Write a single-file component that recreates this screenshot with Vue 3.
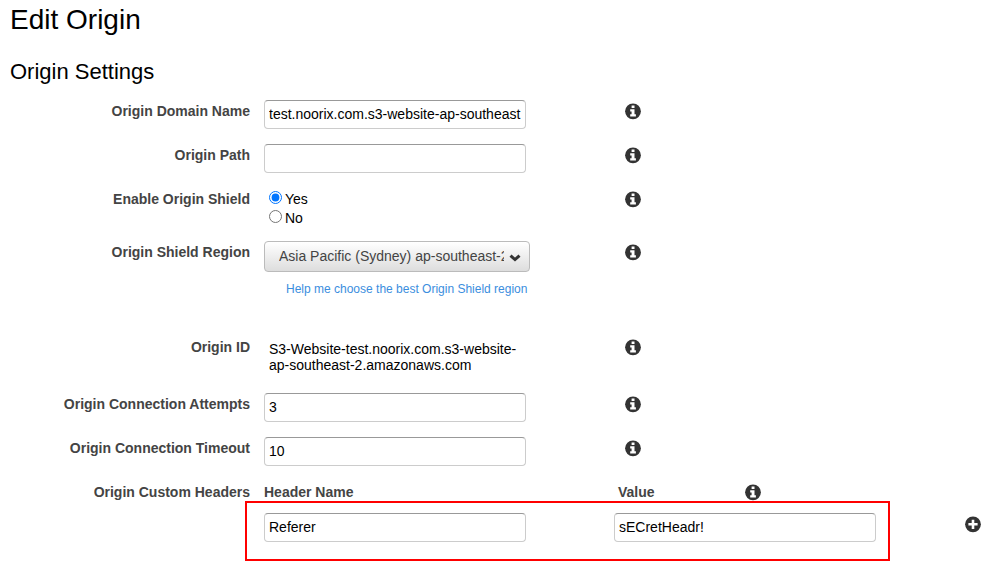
<script setup>
import { ref, h } from 'vue'

const domain = ref('test.noorix.com.s3-website-ap-southeast')
const path = ref('')
const shield = ref('yes')
const region = ref('ap-southeast-2')
const attempts = ref('3')
const timeout = ref('10')
const headerName = ref('Referer')
const headerValue = ref('sECretHeadr!')

const InfoIcon = () =>
  h('svg', { viewBox: '0 0 16 16', width: 16, height: 16, 'aria-hidden': 'true' }, [
    h('circle', { cx: 8, cy: 8.3, r: 7.9, fill: '#333' }),
    h('path', { d: 'M6.600 2.400h2.900v2.500H6.600zM5.200 6.200h4.300v5h1.400v2.200H5.200v-2.200h1.400V8.400H5.200z', fill: '#fff' }),
  ])
</script>

<template>
  <main class="page">
    <h1>Edit Origin</h1>
    <h2>Origin Settings</h2>
    <form class="form" @submit.prevent>
      <div class="row">
        <label class="name" for="domain">Origin Domain Name</label>
        <input id="domain" v-model="domain" class="text" type="text">
        <button class="icon" type="button" aria-label="About origin domain name"><InfoIcon /></button>
      </div>
      <div class="row">
        <label class="name" for="path">Origin Path</label>
        <input id="path" v-model="path" class="text" type="text">
        <button class="icon" type="button" aria-label="About origin path"><InfoIcon /></button>
      </div>
      <div class="row">
        <span id="shield-label" class="name">Enable Origin Shield</span>
        <div class="radios" role="radiogroup" aria-labelledby="shield-label">
          <label><input v-model="shield" type="radio" name="shield" value="yes">Yes</label>
          <label><input v-model="shield" type="radio" name="shield" value="no">No</label>
        </div>
        <button class="icon" type="button" aria-label="About origin shield"><InfoIcon /></button>
      </div>
      <div class="row region-row">
        <label class="name" for="region">Origin Shield Region</label>
        <div class="region">
          <div class="select">
            <select id="region" v-model="region">
              <option value="ap-southeast-2">Asia Pacific (Sydney) ap-southeast-2</option>
            </select>
            <svg class="chevron" viewBox="0 0 12 8" width="12" height="8" aria-hidden="true">
              <path d="M1.500 1.600 6 5.600l4.500-4" fill="none" stroke="#333" stroke-width="3" />
            </svg>
          </div>
          <a class="help" href="#">Help me choose the best Origin Shield region</a>
        </div>
        <button class="icon" type="button" aria-label="About origin shield region"><InfoIcon /></button>
      </div>
      <div class="row">
        <span class="name">Origin ID</span>
        <div class="origin-id">S3-Website-test.noorix.com.s3-website-<wbr>ap-southeast-2.amazonaws.com</div>
        <button class="icon" type="button" aria-label="About origin ID"><InfoIcon /></button>
      </div>
      <div class="row">
        <label class="name" for="attempts">Origin Connection Attempts</label>
        <input id="attempts" v-model="attempts" class="text" type="text">
        <button class="icon" type="button" aria-label="About connection attempts"><InfoIcon /></button>
      </div>
      <div class="row">
        <label class="name" for="timeout">Origin Connection Timeout</label>
        <input id="timeout" v-model="timeout" class="text" type="text">
        <button class="icon" type="button" aria-label="About connection timeout"><InfoIcon /></button>
      </div>
      <div class="row headers-row">
        <span class="name">Origin Custom Headers</span>
        <div class="headers">
          <div class="captions">
            <label class="name" for="header-name">Header Name</label>
            <div class="value-caption">
              <label class="name" for="header-value">Value</label>
              <button class="icon" type="button" aria-label="About custom headers"><InfoIcon /></button>
            </div>
          </div>
          <div class="pair">
            <input id="header-name" v-model="headerName" class="text" type="text">
            <input id="header-value" v-model="headerValue" class="text" type="text">
            <div class="highlight"></div>
          </div>
        </div>
        <button class="icon add" type="button" aria-label="Add header">
          <svg viewBox="0 0 16 16" width="16" height="16" aria-hidden="true">
            <circle cx="8" cy="8.300" r="7.900" fill="#333" />
            <path d="M6.700 3.700h2.600v3.300h3.300v2.600H9.300v3.300H6.700V9.600H3.400V7h3.300z" fill="#fff" />
          </svg>
        </button>
      </div>
    </form>
  </main>
</template>

<style>
body {
  background: #fff;
}
</style>

<style scoped>
.page {
  padding: 4px 22px 34px 10px;
  font: 14px/16px "Liberation Sans", Arial, sans-serif;
  color: #000;
}

h1,
h2 {
  margin: 0;
  font-weight: 400;
}

h1 {
  font-size: 28px;
  line-height: 32px;
}

h2 {
  margin-top: 24px;
  font-size: 22px;
  line-height: 24px;
}

.form {
  display: flex;
  flex-direction: column;
  gap: 15px;
  margin-top: 16px;
}

.row {
  display: grid;
  grid-template-columns: 240px 262px 16px;
  align-items: start;
  column-gap: 14px;
}

.row > .icon {
  margin-left: 85px;
}

.name {
  padding-top: 3px;
  font-weight: 700;
  color: #444;
}

.row > .name {
  text-align: right;
}

.text {
  box-sizing: border-box;
  width: 100%;
  height: 29px;
  padding: 0 4px 2px;
  border: 1px solid #ccc;
  border-top-color: #999;
  border-radius: 4px;
  background: #fff;
  font: inherit;
  color: #000;
}

.icon {
  display: block;
  width: 16px;
  height: 16px;
  margin-top: 3px;
  padding: 0;
  border: 0;
  background: none;
}

.icon svg {
  display: block;
  overflow: visible;
}

.radios label {
  display: flex;
  gap: 3px;
  height: 19px;
  padding-left: 5px;
  line-height: 22px;
}

.radios input {
  width: 13px;
  height: 13px;
  margin: 3px 0 0;
}

.region-row {
  min-height: 80px;
}

.select {
  position: relative;
  width: 266px;
}

select {
  display: block;
  box-sizing: border-box;
  width: 100%;
  height: 31px;
  padding: 0 25px 2px 14px;
  border: 1px solid #bbb;
  border-radius: 4px;
  appearance: none;
  background: linear-gradient(#fff, #ddd);
  font: inherit;
  color: #444;
}

.chevron {
  position: absolute;
  top: 13px;
  right: 9px;
  pointer-events: none;
}

.help {
  display: block;
  margin: 9px 0 0 22px;
  font-size: 12px;
  white-space: nowrap;
  color: #3b8ede;
  text-decoration: none;
}

.origin-id {
  padding: 5px;
  line-height: 16px;
}

.headers-row {
  grid-template-columns: 240px 612px 1fr;
}

.captions,
.pair {
  display: grid;
  grid-template-columns: 262px 262px;
  column-gap: 88px;
}

.value-caption {
  display: grid;
  grid-template-columns: 127px 16px;
  padding-left: 4px;
}

.pair {
  position: relative;
  margin-top: 13px;
}

.highlight {
  position: absolute;
  inset: -12px -14px -19px -19px;
  border: 2px solid #f00;
  pointer-events: none;
}

.headers-row > .add {
  margin: 35px 0 0;
  justify-self: end;
}
</style>
